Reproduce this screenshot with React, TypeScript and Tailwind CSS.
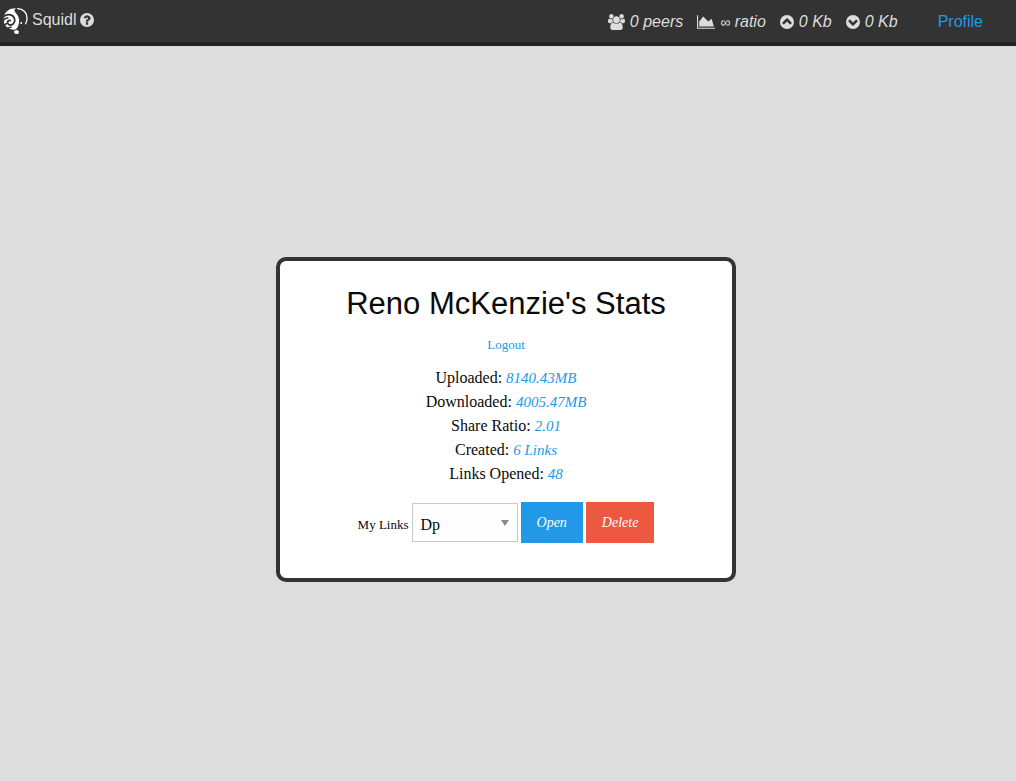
import { useState } from "react";
import type { ReactNode } from "react";

const CHEVRON_UP =
  "M896 128a768 768 0 1 0 0 1536a768 768 0 1 0 0-1536zM1293 1139l102-102q19-19 19-45t-19-45l-454-454q-19-19-45-19t-45 19l-454 454q-19 19-19 45t19 45l102 102q19 19 45 19t45-19l307-307 307 307q19 19 45 19t45-19z";

function PeersIcon() {
  return (
    <svg viewBox="0 0 1920 1792" className="h-4 w-[17px] fill-current" aria-hidden="true">
      <path d="M593 896q-162 5-265 128h-134q-82 0-138-40.5t-56-118.5q0-353 124-353 6 0 43.5 21t97.5 42.5 119 21.5q67 0 133-23-5 37-5 66 0 139 81 256zm1071 637q0 120-73 189.5t-194 69.5h-874q-121 0-194-69.5t-73-189.5q0-53 3.5-103.5t14-109 26.5-108.5 43-97.5 62-81 85.5-53.5 111.5-20q10 0 43 21.5t73 48 107 48 135 21.5 135-21.5 107-48 73-48 43-21.5q61 0 111.5 20t85.5 53.5 62 81 43 97.5 26.5 108.5 14 109 3.5 103.5zm-1024-1277q0 106-75 181t-181 75-181-75-75-181 75-181 181-75 181 75 75 181zm704 384q0 159-112.5 271.5t-271.5 112.5-271.5-112.5-112.5-271.5 112.5-271.5 271.5-112.5 271.5 112.5 112.5 271.5zm576 225q0 78-56 118.5t-138 40.5h-134q-103-123-265-128 81-117 81-256 0-29-5-66 66 23 133 23 59 0 119-21.5t97.5-42.5 43.5-21q124 0 124 353zm-128-609q0 106-75 181t-181 75-181-75-75-181 75-181 181-75 181 75 75 181z" />
    </svg>
  );
}

function RatioIcon() {
  return (
    <svg viewBox="0 0 2048 1792" className="h-4 w-[18px] fill-current" aria-hidden="true">
      <path d="M2048 1536v128h-2048v-1536h128v1408h1920zm-384-1024l256 896h-1664v-576l448-576 576 576z" />
    </svg>
  );
}

function UpIcon() {
  return (
    <svg viewBox="128 128 1536 1536" className="size-[14px] fill-current" aria-hidden="true">
      <path fillRule="evenodd" d={CHEVRON_UP} />
    </svg>
  );
}

function DownIcon() {
  return (
    <svg viewBox="128 128 1536 1536" className="size-[14px] rotate-180 fill-current" aria-hidden="true">
      <path fillRule="evenodd" d={CHEVRON_UP} />
    </svg>
  );
}

function HelpIcon() {
  return (
    <svg viewBox="128 128 1536 1536" className="size-[14px] fill-current" aria-hidden="true">
      <path
        fillRule="evenodd"
        d="M896 128a768 768 0 1 0 0 1536a768 768 0 1 0 0-1536zM1024 1376v-192q0-14-9-23t-23-9h-192q-14 0-23 9t-9 23v192q0 14 9 23t23 9h192q14 0 23-9t9-23zm256-672q0-88-55.5-163t-138.5-116-170-41q-243 0-371 213-15 24 8 42l132 100q7 6 19 6 16 0 25-12 53-68 86-92 34-24 86-24 48 0 85.5 26t37.5 59q0 38-20 61t-68 45q-63 28-115.5 86.5t-52.5 125.5v36q0 14 9 23t23 9h192q14 0 23-9t9-23q0-19 21.5-49.5t54.5-49.5q32-18 49-28.5t46-35 44.5-48 28-60.5 12.5-81z"
      />
    </svg>
  );
}

function Logo() {
  return (
    <svg viewBox="0 0 26 28" className="h-7 w-[26px]" fill="none" aria-hidden="true">
      <path
        fill="#fff"
        d="M1.2 8.4C2.8 3.8 7.6 1 13 1.3C11 2.4 11 4 12.4 5.6C15.2 8.6 16.6 11.6 16 15.4C15.6 19 14 22.4 11.4 22.8C7 22.6 3 20.2 1.6 17.2C.4 14.2 .4 11 1.2 8.4z"
      />
      <path
        stroke="#333"
        strokeWidth="1.8"
        d="M0 10.2C3.2 7 8.6 6.8 10.8 10.2C12.8 13.6 11.2 17.6 7.8 18C5 18.2 3.8 15.4 5.2 13.8C6 13 7.4 13.2 7.6 14.4"
      />
      <path stroke="#333" strokeWidth="1.5" d="M0 14.2C1 11.8 3.2 10.8 5.4 11M0 19.4C2 17 3 16.6 4.4 16.2M3.6 23C5 20.6 6.6 20 8.6 20.2" />
      <path stroke="#fff" strokeWidth="1.3" strokeLinecap="round" d="M14.6 1.6C20.6 1.8 24 6 24 11C24 13.2 23.6 15.2 22.6 16.8" />
      <circle cx="18.2" cy="16" r="1" fill="#fff" />
      <path fill="#fff" d="M10.8 24.4L13.4 22.8L16 24.2L15.2 27L11.8 26.8z" />
    </svg>
  );
}

function HeaderStat({ icon, children }: { icon: ReactNode; children: ReactNode }) {
  return (
    <li className="flex items-center gap-[5px]">
      {icon}
      <em>{children}</em>
    </li>
  );
}

const stats = [
  { label: "Uploaded:", value: "8140.43MB" },
  { label: "Downloaded:", value: "4005.47MB" },
  { label: "Share Ratio:", value: "2.01" },
  { label: "Created:", value: "6 Links" },
  { label: "Links Opened:", value: "48" },
];

export default function App() {
  const [link, setLink] = useState("Dp");

  return (
    <div className="flex min-h-screen flex-col bg-[#ddd] font-['Liberation_Sans',Arial,sans-serif] text-base text-[#0a0a0a]">
      <header className="flex items-start justify-between border-b-4 border-[#222] bg-[#333] text-[#ddd]">
        <div className="flex h-[42px] items-center gap-[3px] pl-[3px]">
          <Logo />
          <div className="flex items-center gap-1 pb-[2px]">
            <span>Squidl</span>
            <a href="#help" aria-label="Help">
              <HelpIcon />
            </a>
          </div>
        </div>
        <div className="flex h-[42px] items-center pt-[2px] pr-[33px]">
          <ul className="flex gap-[14px]">
            <HeaderStat icon={<PeersIcon />}>0 peers</HeaderStat>
            <HeaderStat icon={<RatioIcon />}>
              <span className="text-sm">∞</span> ratio
            </HeaderStat>
            <HeaderStat icon={<UpIcon />}>0 Kb</HeaderStat>
            <HeaderStat icon={<DownIcon />}>0 Kb</HeaderStat>
          </ul>
          <a href="#profile" className="ml-10 text-[#2199e8]">
            Profile
          </a>
        </div>
      </header>

      <main className="flex grow items-center justify-center pt-3 pr-1">
        <section className="w-full max-w-[460px] rounded-[10px] border-4 border-[#333] bg-white pt-[21px] pb-[35px] text-center font-['Liberation_Serif','Times_New_Roman',serif]">
          <h1 className="font-['Liberation_Sans',Arial,sans-serif] text-[31px] leading-[44px]">
            Reno McKenzie's Stats
          </h1>
          <a href="#logout" className="mt-[7px] block text-[13px] leading-6 text-[#2199e8]">
            Logout
          </a>
          <ul className="mt-[9px] leading-6">
            {stats.map((s) => (
              <li key={s.label}>
                {s.label} <em className="text-[15px] text-[#2199e8]">{s.value}</em>
              </li>
            ))}
          </ul>
          <form className="mt-4 flex items-center justify-center gap-[3px]" onSubmit={(e) => e.preventDefault()}>
            <label htmlFor="my-links" className="pt-1 text-[13px]">
              My Links
            </label>
            <div className="grid items-center">
              <select
                id="my-links"
                value={link}
                onChange={(e) => setLink(e.target.value)}
                className="col-start-1 row-start-1 h-[39px] w-[106px] appearance-none border border-[#cacaca] bg-[#fefefe] pt-1 pl-2 text-base"
              >
                <option>Dp</option>
              </select>
              <svg
                viewBox="0 0 8 6"
                className="pointer-events-none col-start-1 row-start-1 mr-[9px] h-[6px] w-2 justify-self-end"
                aria-hidden="true"
              >
                <path d="M0 0h8L4 6z" fill="#8a8a8a" />
              </svg>
            </div>
            <button type="submit" className="h-[41px] bg-[#2199e8] px-4 text-sm text-white italic">
              Open
            </button>
            <button type="button" className="h-[41px] bg-[#ec5840] px-4 text-sm text-white italic">
              Delete
            </button>
          </form>
        </section>
      </main>
    </div>
  );
}
